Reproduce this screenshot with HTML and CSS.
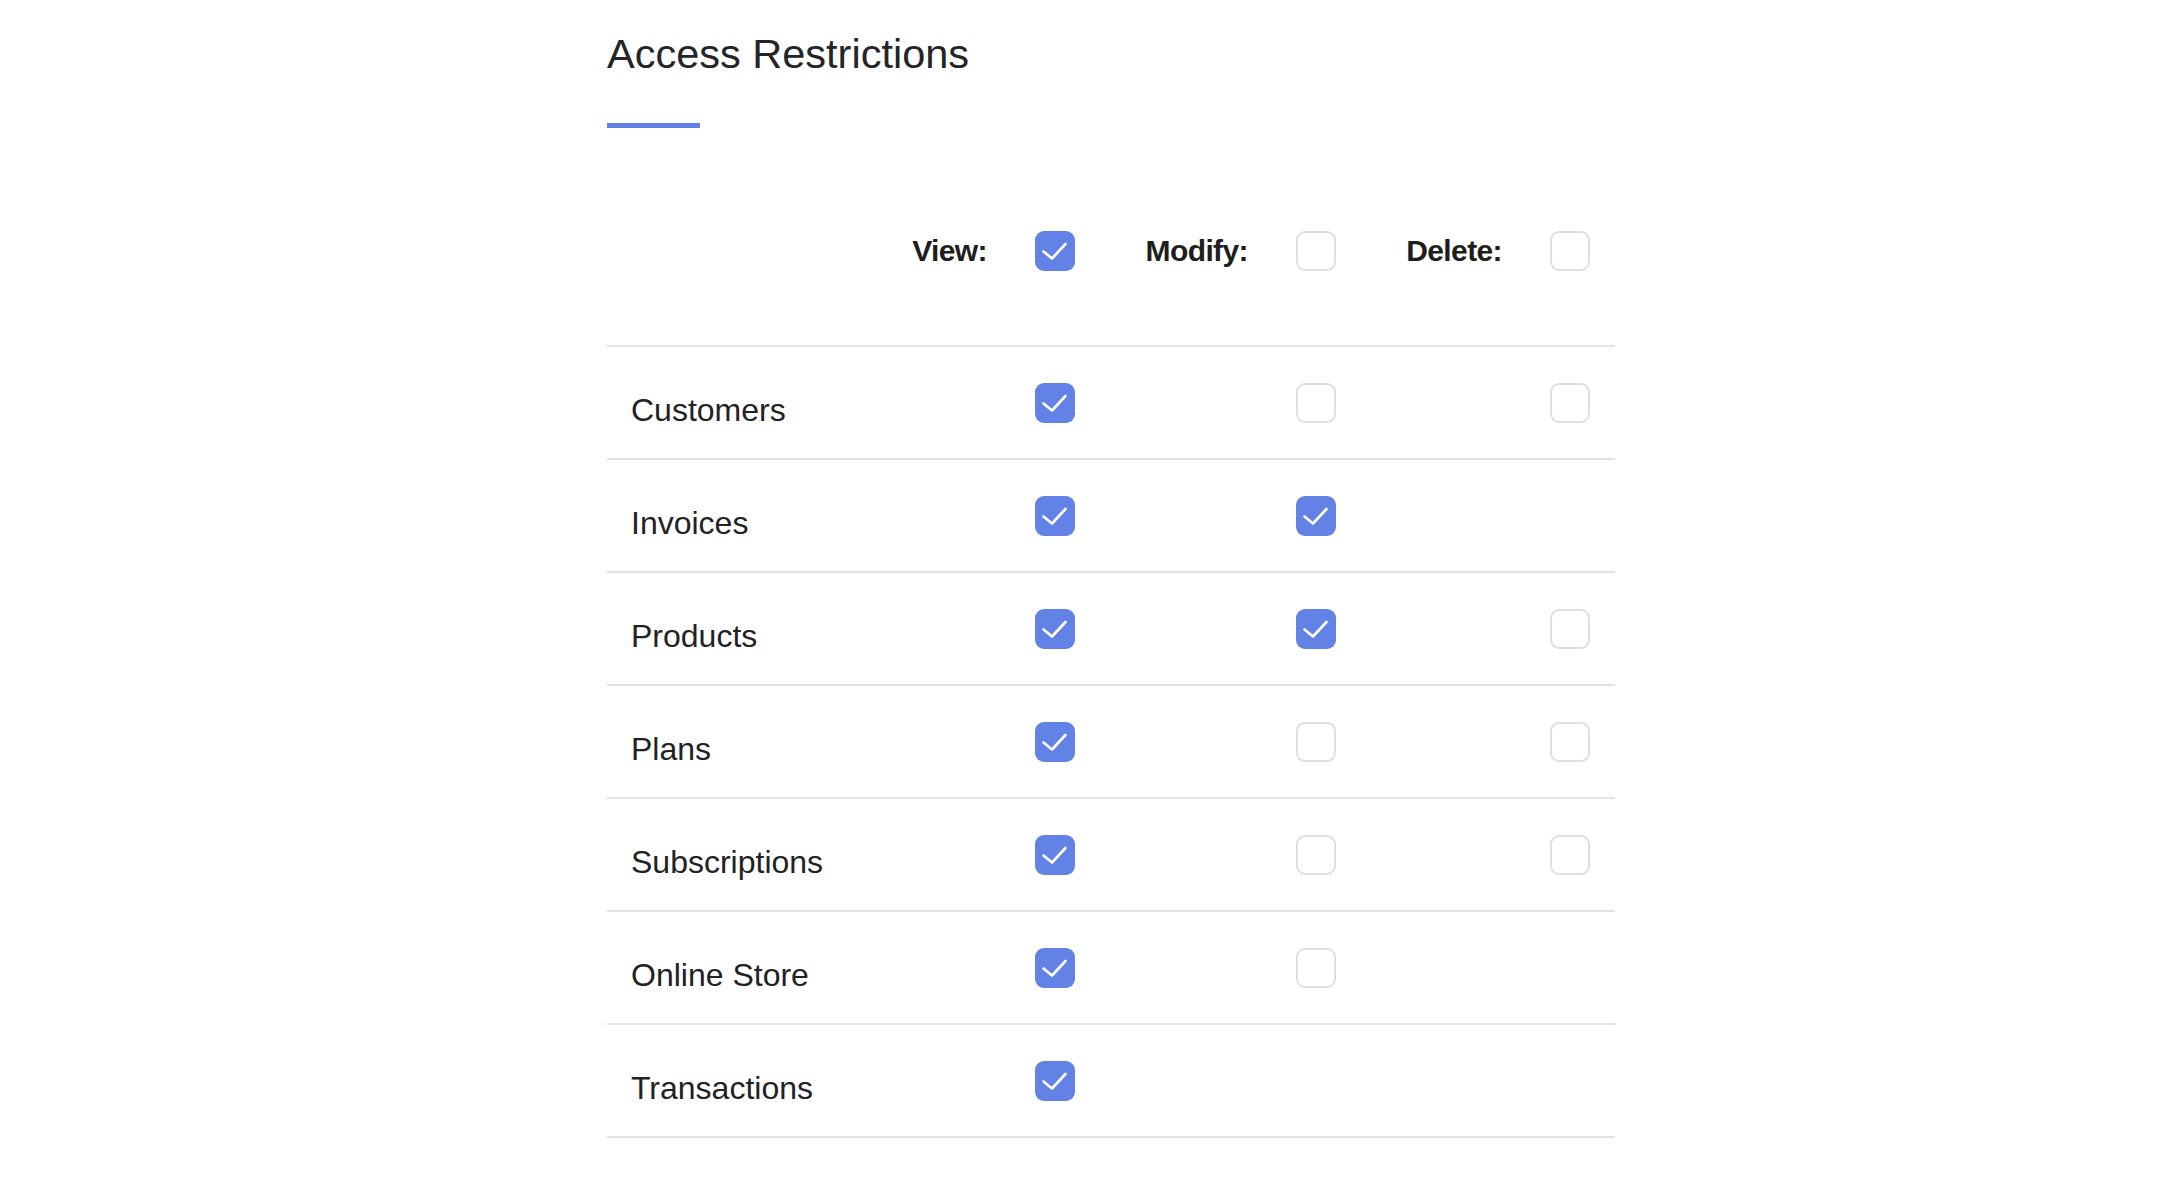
FILE: index.html
```html
<!DOCTYPE html>
<html lang="en">
<head>
<meta charset="utf-8">
<title>Access Restrictions</title>
<link rel="stylesheet" href="styles.css">
</head>
<body>
<main class="panel">
  <h1 class="title">Access Restrictions</h1>
  <div class="title-bar"></div>

  <div class="grid header">
    <div class="hcell first"><span class="hlabel">View:</span></div>
    <div class="hcell"><span class="cb on"><svg viewBox="0 0 40 40"><path d="M8.5 20.5 L17 27.5 L30.5 13"/></svg></span><span class="hlabel">Modify:</span></div>
    <div class="hcell"><span class="cb"></span><span class="hlabel">Delete:</span></div>
    <div class="hcell"><span class="cb"></span></div>
  </div>

  <div class="grid row">
    <div class="label">Customers</div>
    <div class="cell"><span class="cb on"><svg viewBox="0 0 40 40"><path d="M8.5 20.5 L17 27.5 L30.5 13"/></svg></span></div>
    <div class="cell"><span class="cb"></span></div>
    <div class="cell"><span class="cb"></span></div>
  </div>
  <div class="grid row">
    <div class="label">Invoices</div>
    <div class="cell"><span class="cb on"><svg viewBox="0 0 40 40"><path d="M8.5 20.5 L17 27.5 L30.5 13"/></svg></span></div>
    <div class="cell"><span class="cb on"><svg viewBox="0 0 40 40"><path d="M8.5 20.5 L17 27.5 L30.5 13"/></svg></span></div>
    <div class="cell"></div>
  </div>
  <div class="grid row">
    <div class="label">Products</div>
    <div class="cell"><span class="cb on"><svg viewBox="0 0 40 40"><path d="M8.5 20.5 L17 27.5 L30.5 13"/></svg></span></div>
    <div class="cell"><span class="cb on"><svg viewBox="0 0 40 40"><path d="M8.5 20.5 L17 27.5 L30.5 13"/></svg></span></div>
    <div class="cell"><span class="cb"></span></div>
  </div>
  <div class="grid row">
    <div class="label">Plans</div>
    <div class="cell"><span class="cb on"><svg viewBox="0 0 40 40"><path d="M8.5 20.5 L17 27.5 L30.5 13"/></svg></span></div>
    <div class="cell"><span class="cb"></span></div>
    <div class="cell"><span class="cb"></span></div>
  </div>
  <div class="grid row">
    <div class="label">Subscriptions</div>
    <div class="cell"><span class="cb on"><svg viewBox="0 0 40 40"><path d="M8.5 20.5 L17 27.5 L30.5 13"/></svg></span></div>
    <div class="cell"><span class="cb"></span></div>
    <div class="cell"><span class="cb"></span></div>
  </div>
  <div class="grid row">
    <div class="label">Online Store</div>
    <div class="cell"><span class="cb on"><svg viewBox="0 0 40 40"><path d="M8.5 20.5 L17 27.5 L30.5 13"/></svg></span></div>
    <div class="cell"><span class="cb"></span></div>
    <div class="cell"></div>
  </div>
  <div class="grid row">
    <div class="label">Transactions</div>
    <div class="cell"><span class="cb on"><svg viewBox="0 0 40 40"><path d="M8.5 20.5 L17 27.5 L30.5 13"/></svg></span></div>
    <div class="cell"></div>
    <div class="cell"></div>
  </div>
</main>
</body>
</html>
```

FILE: styles.css
```css
html, body {
  margin: 0;
  padding: 0;
  background: #ffffff;
}

body {
  font-family: "Liberation Sans", Arial, Helvetica, sans-serif;
  color: #222224;
}

.panel {
  width: 1008px;
  margin-left: 607px;
  padding-top: 29px;
}

.title {
  margin: 0;
  font-size: 41.5px;
  line-height: 50px;
  font-weight: 400;
  color: #252527;
}

.title-bar {
  width: 93px;
  height: 5px;
  margin-top: 44px;
  background: #6382e6;
}

.grid {
  display: grid;
  grid-template-columns: 428px 261px 254px 65px;
  align-items: center;
}

.header {
  margin-top: 103px;
  height: 40px;
  padding-bottom: 74px;
  border-bottom: 2px solid #e3e3e6;
}

.hcell {
  display: flex;
  align-items: center;
  justify-content: space-between;
  height: 40px;
}

.hcell.first {
  justify-content: flex-end;
}

.hlabel {
  font-size: 30px;
  font-weight: 700;
  letter-spacing: -0.6px;
  color: #1e1e20;
  margin-right: 48px;
  line-height: 40px;
}

.row {
  height: 111px;
  border-bottom: 2px solid #e3e3e6;
}

.label {
  padding-left: 24px;
  padding-top: 15px;
  font-size: 32px;
  line-height: 36px;
  color: #222224;
}

.cell {
  display: flex;
  align-items: center;
}

.cb {
  display: block;
  box-sizing: border-box;
  width: 40px;
  height: 40px;
  border: 2px solid #dfdfe3;
  border-radius: 9px;
  background: #ffffff;
}

.cb.on {
  border: none;
  background: #6382e6;
}

.cb svg {
  display: block;
  width: 40px;
  height: 40px;
}

.cb svg path {
  fill: none;
  stroke: #ffffff;
  stroke-width: 2.6;
  stroke-linecap: round;
  stroke-linejoin: round;
}
```
